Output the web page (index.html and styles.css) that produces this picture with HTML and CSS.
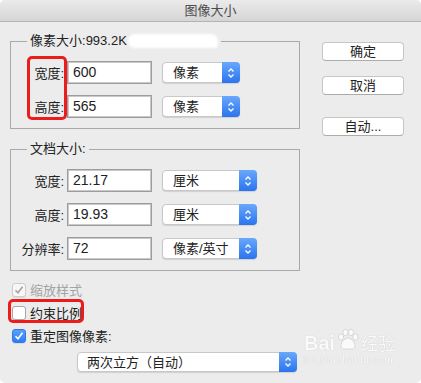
FILE: index.html
```html
<!DOCTYPE html>
<html lang="zh-CN">
<head>
    <meta charset="UTF-8">
    <title>图像大小</title>
    <link rel="stylesheet" href="styles.css">
</head>
<body>
    <div class="window">
        <div class="titlebar">图像大小</div>
        <div class="content">
            <div class="main">
                <fieldset class="group group-pixels">
                    <legend>像素大小:<span class="num">993.2K</span><span class="smudge"></span></legend>
                    <div class="rows">
                        <div class="row">
                            <label>宽度:</label>
                            <div class="field">600</div>
                            <div class="select select-sm">像素<span class="stepper"><svg width="10" height="14" viewBox="0 0 10 14"><path d="M2.5 5.5 L5 3 L7.5 5.5 M2.5 8.5 L5 11 L7.5 8.5" fill="none" stroke="#fff" stroke-width="1.3"/></svg></span></div>
                        </div>
                        <div class="row">
                            <label>高度:</label>
                            <div class="field">565</div>
                            <div class="select select-sm">像素<span class="stepper"><svg width="10" height="14" viewBox="0 0 10 14"><path d="M2.5 5.5 L5 3 L7.5 5.5 M2.5 8.5 L5 11 L7.5 8.5" fill="none" stroke="#fff" stroke-width="1.3"/></svg></span></div>
                        </div>
                        <div class="mark mark-labels"></div>
                    </div>
                </fieldset>

                <fieldset class="group group-doc">
                    <legend>文档大小:</legend>
                    <div class="rows">
                        <div class="row">
                            <label>宽度:</label>
                            <div class="field">21.17</div>
                            <div class="select select-md">厘米<span class="stepper"><svg width="10" height="14" viewBox="0 0 10 14"><path d="M2.5 5.5 L5 3 L7.5 5.5 M2.5 8.5 L5 11 L7.5 8.5" fill="none" stroke="#fff" stroke-width="1.3"/></svg></span></div>
                        </div>
                        <div class="row">
                            <label>高度:</label>
                            <div class="field">19.93</div>
                            <div class="select select-md">厘米<span class="stepper"><svg width="10" height="14" viewBox="0 0 10 14"><path d="M2.5 5.5 L5 3 L7.5 5.5 M2.5 8.5 L5 11 L7.5 8.5" fill="none" stroke="#fff" stroke-width="1.3"/></svg></span></div>
                        </div>
                        <div class="row">
                            <label>分辨率:</label>
                            <div class="field">72</div>
                            <div class="select select-md">像素/英寸<span class="stepper"><svg width="10" height="14" viewBox="0 0 10 14"><path d="M2.5 5.5 L5 3 L7.5 5.5 M2.5 8.5 L5 11 L7.5 8.5" fill="none" stroke="#fff" stroke-width="1.3"/></svg></span></div>
                        </div>
                    </div>
                </fieldset>

                <div class="checks">
                    <div class="check disabled">
                        <span class="box checked"><svg width="14" height="14" viewBox="0 0 14 14"><path d="M3.5 7.2 L6 9.8 L10.5 3.8" fill="none" stroke="#a3a3a3" stroke-width="1.6"/></svg></span>
                        缩放样式
                    </div>
                    <div class="check">
                        <span class="box"></span>
                        约束比例
                        <div class="mark mark-check"></div>
                    </div>
                    <div class="check">
                        <span class="box blue"><svg width="14" height="14" viewBox="0 0 14 14"><path d="M3.5 7.2 L6 9.8 L10.5 3.8" fill="none" stroke="#fff" stroke-width="1.6"/></svg></span>
                        重定图像像素:
                    </div>
                </div>

                <div class="select select-wide">两次立方（自动）<span class="stepper"><svg width="10" height="14" viewBox="0 0 10 14"><path d="M2.5 5.5 L5 3 L7.5 5.5 M2.5 8.5 L5 11 L7.5 8.5" fill="none" stroke="#fff" stroke-width="1.3"/></svg></span></div>
            </div>

            <div class="buttons">
                <button class="btn">确定</button>
                <button class="btn">取消</button>
                <button class="btn btn-auto">自动...</button>
            </div>
        </div>

        <div class="watermark">
            <div class="wm-top">
                <span class="wm-bai">Bai</span>
                <svg class="wm-paw" width="24" height="24" viewBox="0 0 24 24">
                    <g fill="#fff" stroke="#cfcfcf" stroke-width="1">
                        <ellipse cx="5" cy="9" rx="2.6" ry="3.2"/>
                        <ellipse cx="9.5" cy="4.5" rx="2.6" ry="3.2"/>
                        <ellipse cx="15" cy="4.5" rx="2.6" ry="3.2"/>
                        <ellipse cx="19.5" cy="9" rx="2.6" ry="3.2"/>
                        <path d="M12 10 C8 10 4 16 5 19 C6 22 10 21 12 21 C14 21 18 22 19 19 C20 16 16 10 12 10 Z"/>
                    </g>
                </svg>
                <span class="wm-jy">经验</span>
            </div>
            <div class="wm-url">jingyan.baidu.com</div>
        </div>
    </div>
</body>
</html>
```

FILE: styles.css
```css
* {
    box-sizing: border-box;
}

body {
    margin: 0;
    background: #fff;
    font-family: "Liberation Sans", "Noto Sans CJK SC", sans-serif;
    font-size: 13px;
    color: #222;
}

.window {
    position: relative;
    width: 421px;
    height: 383px;
    background: #ececec;
    border-radius: 5px;
    overflow: hidden;
}

.titlebar {
    height: 22px;
    line-height: 21px;
    text-align: center;
    color: #4d4d4d;
    background: linear-gradient(#ebebeb, #d5d5d5);
    border-bottom: 1px solid #b4b4b4;
}

.content {
    display: flex;
}

.main {
    width: 300px;
    padding-left: 10px;
}

/* group boxes */
.group {
    margin: 0;
    padding: 12px 0 10px 0;
    border: 1px solid #a9a9a9;
    min-width: 0;
}

.group legend {
    margin-left: 16px;
    padding: 0 3px 0 3px;
    line-height: 16px;
    color: #222;
}

.group-pixels {
    margin-top: 11px;
}

.group-doc {
    margin-top: 12px;
}

.smudge {
    display: inline-block;
    width: 90px;
    height: 14px;
    margin-left: 1px;
    vertical-align: -3px;
    background: #fff;
    border-radius: 7px 7px 4px 7px;
    filter: blur(1px);
}

.rows {
    position: relative;
    display: flex;
    flex-direction: column;
    gap: 11px;
}

.row {
    display: flex;
    align-items: center;
    height: 23px;
}

.row label {
    width: 53px;
    margin-right: 3px;
    text-align: right;
}

.field {
    width: 85px;
    height: 23px;
    padding-left: 5px;
    line-height: 21px;
    background: #fff;
    border: 1px solid #9d9d9d;
    box-shadow: inset 0 0 0 1px #c9c9c9;
    font-size: 14px;
}

/* popup menus */
.select {
    position: relative;
    height: 21px;
    line-height: 20px;
    padding-left: 10px;
    background: #fff;
    border: 1px solid #c8c8c8;
    border-radius: 4px;
    box-shadow: 0 1px 1px rgba(0,0,0,0.12);
}

.select-sm {
    width: 78px;
    margin-left: 10px;
}

.select-md {
    width: 95px;
    margin-left: 10px;
}

.select-wide {
    width: 220px;
    height: 20px;
    margin: 9px 0 0 67px;
    padding-left: 9px;
    line-height: 19px;
}

.stepper {
    position: absolute;
    top: -1px;
    right: -1px;
    bottom: -1px;
    width: 18px;
    display: flex;
    align-items: center;
    justify-content: center;
    background: linear-gradient(#69a8fb, #2a74ef);
    border-radius: 0 4px 4px 0;
}

/* checkboxes */
.checks {
    display: flex;
    flex-direction: column;
    gap: 8px;
    margin-top: 11px;
    padding-left: 2px;
}

.check {
    position: relative;
    display: flex;
    align-items: center;
    height: 15px;
    gap: 4px;
}

.check.disabled {
    color: #a3a3a3;
}

.box {
    width: 14px;
    height: 14px;
    background: #fff;
    border: 1px solid #a8a8a8;
    border-radius: 3px;
    box-shadow: 0 1px 1px rgba(0,0,0,0.08);
    display: flex;
}

.box svg {
    margin: -1px;
}

.box.checked {
    background: #f6f6f6;
    border-color: #cdcdcd;
}

.box.blue {
    background: linear-gradient(#5aa0fa, #2f7cf3);
    border-color: #2f78ec;
}

/* buttons */
.buttons {
    display: flex;
    flex-direction: column;
    margin-left: 22px;
    padding-top: 20px;
}

.btn {
    width: 82px;
    height: 19px;
    padding: 0;
    margin-bottom: 15px;
    font: inherit;
    line-height: 17px;
    color: #222;
    background: #fff;
    border: 1px solid #c6c6c6;
    border-bottom-color: #acacac;
    border-radius: 4px;
}

.btn-auto {
    margin-top: 7px;
}

/* red annotations */
.mark {
    position: absolute;
    border: 3px solid #ec1c1c;
    border-radius: 5px;
}

.mark-labels {
    left: 16px;
    top: -5px;
    width: 40px;
    height: 64px;
}

.mark-check {
    left: -4px;
    top: -6px;
    width: 76px;
    height: 24px;
}

/* watermark */
.watermark {
    position: absolute;
    left: 304px;
    top: 326px;
    color: #fff;
    text-shadow: 0 0 1px #a8a8a8;
    opacity: 0.75;
}

.wm-top {
    display: flex;
    align-items: flex-end;
    height: 28px;
}

.wm-bai {
    font-family: "Liberation Sans", sans-serif;
    font-size: 20px;
    font-weight: bold;
    line-height: 22px;
}

.wm-paw {
    margin: 0 1px 2px 1px;
}

.wm-jy {
    font-size: 17px;
    line-height: 22px;
    font-family: "Noto Sans CJK SC", sans-serif;
}

.wm-url {
    font-size: 10px;
    line-height: 11px;
    letter-spacing: 0.5px;
}
```
